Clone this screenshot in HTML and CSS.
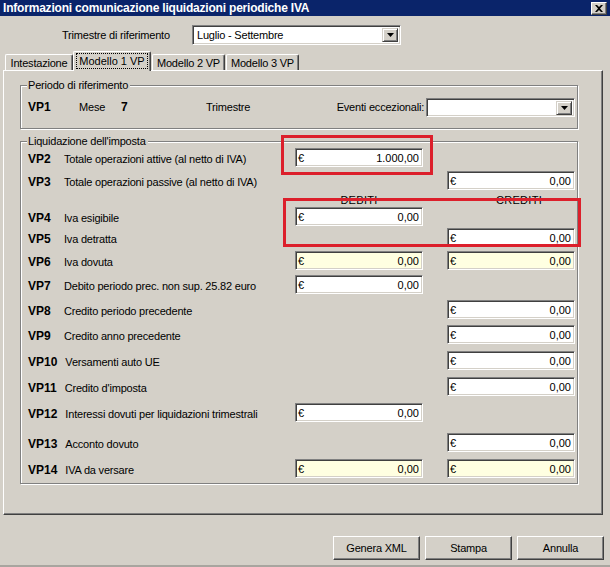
FILE: index.html
```html
<!DOCTYPE html>
<html lang="it">
<head>
<meta charset="utf-8">
<title>Informazioni comunicazione liquidazioni periodiche IVA</title>
<link rel="stylesheet" href="styles.css">
</head>
<body>
<div class="window">
  <div class="titlebar">
    <span class="title">Informazioni comunicazione liquidazioni periodiche IVA</span>
    <span class="close-btn"><svg width="8" height="7" viewBox="0 0 8 7"><path d="M0 0h2l2 2 2-2h2L5 3.5 8 7H6L4 5 2 7H0l3-3.5z" fill="#000"/></svg></span>
  </div>

  <div class="period-select">
    <span class="ps-label">Trimestre di riferimento</span>
    <div class="combo combo-trimestre">
      <span class="combo-text">Luglio - Settembre</span>
      <span class="combo-btn"><svg width="7" height="4" viewBox="0 0 7 4"><path d="M0 0h7L3.5 4z" fill="#000"/></svg></span>
    </div>
  </div>

  <div class="tabs">
    <div class="tab tab-int">Intestazione</div>
    <div class="tab tab-active"><span class="focus">Modello 1 VP</span></div>
    <div class="tab tab-m">Modello 2 VP</div>
    <div class="tab tab-m">Modello 3 VP</div>
  </div>

  <div class="panel">
    <div class="group g-periodo">
      <span class="group-title">Periodo di riferimento</span>
      <div class="vp1-row">
        <span class="code vp1-code">VP1</span>
        <span class="mese">Mese</span>
        <span class="code mese-val">7</span>
        <span class="trimestre">Trimestre</span>
        <span class="eventi">Eventi eccezionali:</span>
        <div class="combo combo-eventi">
          <span class="combo-text"></span>
          <span class="combo-btn"><svg width="7" height="4" viewBox="0 0 7 4"><path d="M0 0h7L3.5 4z" fill="#000"/></svg></span>
        </div>
      </div>
    </div>

    <div class="group g-liq">
      <span class="group-title">Liquidazione dell'imposta</span>
      <div class="liq-grid">
        <div class="lbl"><span class="code">VP2</span><span>Totale operazioni attive (al netto di IVA)</span></div>
        <div class="field deb"><span>€</span><span>1.000,00</span></div>

        <div class="lbl"><span class="code">VP3</span><span>Totale operazioni passive (al netto di IVA)</span></div>
        <div class="field cred"><span>€</span><span>0,00</span></div>

        <div class="colhead deb">DEBITI</div>
        <div class="colhead cred credhead">CREDITI</div>

        <div class="lbl"><span class="code">VP4</span><span>Iva esigibile</span></div>
        <div class="field deb"><span>€</span><span>0,00</span></div>

        <div class="lbl"><span class="code">VP5</span><span>Iva detratta</span></div>
        <div class="field cred"><span>€</span><span>0,00</span></div>

        <div class="lbl"><span class="code">VP6</span><span>Iva dovuta</span></div>
        <div class="field deb yellow"><span>€</span><span>0,00</span></div>
        <div class="field cred yellow"><span>€</span><span>0,00</span></div>

        <div class="lbl"><span class="code">VP7</span><span>Debito periodo prec. non sup. 25.82 euro</span></div>
        <div class="field deb"><span>€</span><span>0,00</span></div>

        <div class="lbl"><span class="code">VP8</span><span>Credito periodo precedente</span></div>
        <div class="field cred"><span>€</span><span>0,00</span></div>

        <div class="lbl"><span class="code">VP9</span><span>Credito anno precedente</span></div>
        <div class="field cred"><span>€</span><span>0,00</span></div>

        <div class="lbl"><span class="code">VP10</span><span>Versamenti auto UE</span></div>
        <div class="field cred"><span>€</span><span>0,00</span></div>

        <div class="lbl"><span class="code">VP11</span><span>Credito d'imposta</span></div>
        <div class="field cred"><span>€</span><span>0,00</span></div>

        <div class="lbl"><span class="code">VP12</span><span>Interessi dovuti per liquidazioni trimestrali</span></div>
        <div class="field deb"><span>€</span><span>0,00</span></div>

        <div class="lbl"><span class="code">VP13</span><span>Acconto dovuto</span></div>
        <div class="field cred"><span>€</span><span>0,00</span></div>

        <div class="lbl"><span class="code">VP14</span><span>IVA da versare</span></div>
        <div class="field deb yellow"><span>€</span><span>0,00</span></div>
        <div class="field cred yellow"><span>€</span><span>0,00</span></div>
      </div>
    </div>
  </div>

  <div class="buttons">
    <button class="btn">Genera XML</button>
    <button class="btn">Stampa</button>
    <button class="btn">Annulla</button>
  </div>

  <div class="mark mark-vp2"></div>
  <div class="mark mark-vp45"></div>
</div>
</body>
</html>
```

FILE: styles.css
```css
* { box-sizing: border-box; }

html, body {
  margin: 0;
  padding: 0;
  background: #d4d0c8;
}

body {
  font-family: "Liberation Sans", Arial, sans-serif;
  font-size: 11px;
  letter-spacing: -0.2px;
  color: #000;
}

.window {
  position: relative;
  width: 610px;
  height: 567px;
  background: #d4d0c8;
  border-bottom: 2px solid #a8a59f;
}

/* title bar */
.titlebar {
  height: 16px;
  background: #0a246a;
  display: flex;
  align-items: center;
  padding-left: 3px;
  padding-right: 3px;
}
.title {
  color: #fff;
  font-weight: bold;
  font-size: 12px;
  letter-spacing: -0.2px;
  line-height: 16px;
}
.close-btn {
  margin-left: auto;
  width: 16px;
  height: 13px;
  background: #d4d0c8;
  border-top: 1px solid #fff;
  border-left: 1px solid #fff;
  border-right: 1px solid #404040;
  border-bottom: 1px solid #404040;
  box-shadow: inset -1px -1px 0 #808080;
  display: flex;
  align-items: center;
  justify-content: center;
}

/* combos */
.combo {
  display: flex;
  background: #fff;
  border-top: 1px solid #808080;
  border-left: 1px solid #808080;
  border-right: 1px solid #fff;
  border-bottom: 1px solid #fff;
  box-shadow: inset 1px 1px 0 #404040, inset -1px -1px 0 #d4d0c8;
  padding: 2px;
}
.combo-text {
  flex: 1;
  line-height: 14px;
  padding-left: 2px;
}
.combo-btn {
  width: 16px;
  background: #d4d0c8;
  border-top: 1px solid #d4d0c8;
  border-left: 1px solid #d4d0c8;
  border-right: 1px solid #404040;
  border-bottom: 1px solid #404040;
  box-shadow: inset 1px 1px 0 #fff, inset -1px -1px 0 #808080;
  display: flex;
  align-items: center;
  justify-content: center;
}

.period-select {
  margin-top: 9px;
  height: 20px;
  display: flex;
  align-items: center;
  padding-left: 62px;
}
.ps-label {
  width: 130px;
}
.combo-trimestre {
  width: 209px;
  height: 20px;
}

/* tabs */
.tabs {
  margin-top: 6px;
  height: 19px;
  display: flex;
  align-items: flex-end;
  padding-left: 5px;
  position: relative;
  z-index: 2;
}
.tab {
  height: 16px;
  border-top: 1px solid #fff;
  border-left: 1px solid #fff;
  border-right: 1px solid #404040;
  box-shadow: inset -1px 0 0 #808080;
  border-radius: 2px 2px 0 0;
  display: flex;
  align-items: center;
  justify-content: center;
  background: #d4d0c8;
}
.tab-int { width: 68px; }
.tab-m { width: 73px; margin-left: 1px; }
.tab-active {
  width: 78px;
  height: 20px;
  margin-bottom: -1px;
  align-items: flex-start;
  padding-top: 1px;
}
.focus {
  border: 1px dotted #000;
  padding: 0 2px;
  line-height: 14px;
  letter-spacing: 0;
}

/* panel */
.panel {
  margin-left: 3px;
  width: 600px;
  height: 445px;
  border-top: 1px solid #fff;
  border-left: 1px solid #fff;
  border-right: 1px solid #404040;
  border-bottom: 1px solid #404040;
  box-shadow: inset -1px -1px 0 #808080;
  padding-left: 16px;
  padding-top: 14px;
}

/* group boxes */
.group {
  position: relative;
  width: 558px;
  border: 1px solid #808080;
  box-shadow: inset 1px 1px 0 #fff, 1px 1px 0 #fff;
  padding-left: 7px;
  padding-right: 2px;
}
.group-title {
  position: absolute;
  top: -7px;
  left: 6px;
  padding: 0 2px 0 1px;
  background: #d4d0c8;
  line-height: 13px;
}

.g-periodo {
  height: 44px;
}
.vp1-row {
  height: 42px;
  display: flex;
  align-items: center;
}
.code {
  font-weight: bold;
  font-size: 12px;
  letter-spacing: 0;
}
.vp1-code { width: 51px; }
.mese { width: 42px; }
.mese-val { width: 85px; }
.trimestre { flex: 1; }
.eventi { margin-right: 2px; }
.combo-eventi {
  width: 149px;
  height: 19px;
  padding: 2px 2px 1px 2px;
}

.g-liq {
  margin-top: 12px;
  height: 343px;
  padding-top: 6px;
}
.liq-grid {
  display: grid;
  grid-template-columns: 267px 128px 24px 128px;
  grid-template-rows: 23px 19px 17px 21px 23px 24px 25px 25px 26px 26px 26px 30px 26px 19px;
}
.lbl {
  grid-column: 1;
  height: 19px;
  display: flex;
  align-items: center;
  padding-top: 2px;
  white-space: nowrap;
}
.lbl .code {
  min-width: 36px;
  padding-right: 8px;
}
.field {
  height: 19px;
  display: flex;
  justify-content: space-between;
  align-items: center;
  background: #fff;
  border-top: 1px solid #808080;
  border-left: 1px solid #808080;
  border-right: 1px solid #fff;
  border-bottom: 1px solid #fff;
  box-shadow: inset 1px 1px 0 #404040, inset -1px -1px 0 #d4d0c8;
  padding: 1px 3px 0 2px;
  letter-spacing: 0;
}
.field.yellow { background: #ffffe1; }
.deb { grid-column: 2; }
.cred { grid-column: 4; }
.colhead {
  align-self: end;
  text-align: center;
  line-height: 13px;
  letter-spacing: 0.3px;
}
.credhead { padding-left: 16px; }

/* buttons */
.buttons {
  margin-top: 21px;
  display: flex;
  justify-content: flex-end;
  gap: 5px;
  padding-right: 6px;
}
.btn {
  width: 87px;
  height: 24px;
  font-family: inherit;
  font-size: 11px;
  letter-spacing: -0.2px;
  color: #000;
  background: #d4d0c8;
  border-top: 1px solid #fff;
  border-left: 1px solid #fff;
  border-right: 1px solid #404040;
  border-bottom: 1px solid #404040;
  box-shadow: inset -1px -1px 0 #808080;
  border-radius: 0;
  padding: 0;
}

/* red annotation rectangles (overlay) */
.mark {
  position: absolute;
  border: 3px solid #dc1f2b;
  z-index: 5;
}
.mark-vp2 {
  left: 281px;
  top: 135px;
  width: 152px;
  height: 40px;
}
.mark-vp45 {
  left: 283px;
  top: 198px;
  width: 298px;
  height: 49px;
}
```
